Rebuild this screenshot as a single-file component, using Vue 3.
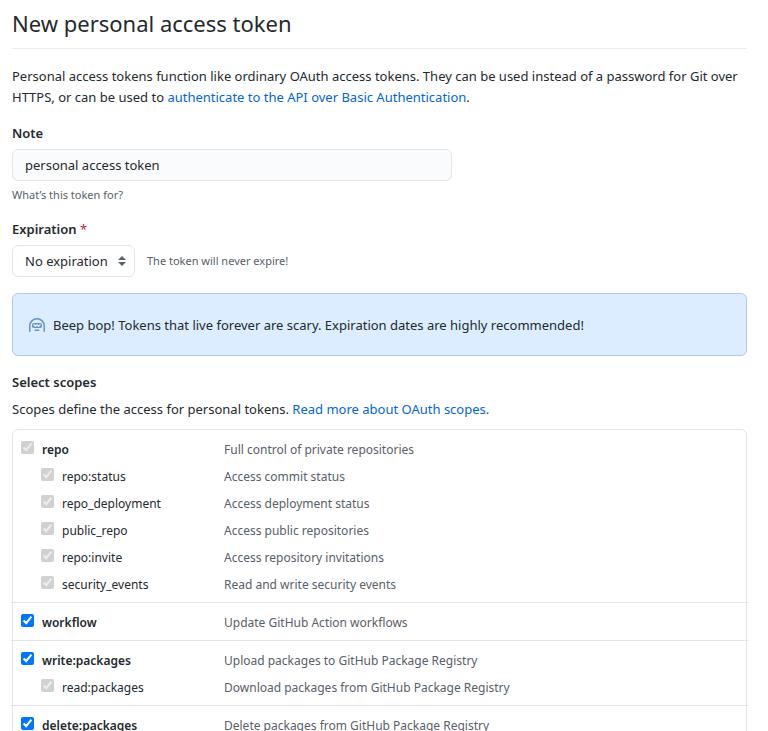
<script setup>
import { ref } from 'vue'

const note = ref('personal access token')
const expiration = ref('none')

const groups = ref([
  [
    { name: 'repo', text: 'Full control of private repositories', checked: true, disabled: true },
    { name: 'repo:status', text: 'Access commit status', checked: true, disabled: true },
    { name: 'repo_deployment', text: 'Access deployment status', checked: true, disabled: true },
    { name: 'public_repo', text: 'Access public repositories', checked: true, disabled: true },
    { name: 'repo:invite', text: 'Access repository invitations', checked: true, disabled: true },
    { name: 'security_events', text: 'Read and write security events', checked: true, disabled: true },
  ],
  [{ name: 'workflow', text: 'Update GitHub Action workflows', checked: true, disabled: false }],
  [
    { name: 'write:packages', text: 'Upload packages to GitHub Package Registry', checked: true, disabled: false },
    { name: 'read:packages', text: 'Download packages from GitHub Package Registry', checked: true, disabled: true },
  ],
  [{ name: 'delete:packages', text: 'Delete packages from GitHub Package Registry', checked: true, disabled: false }],
])
</script>

<template>
  <main class="page">
    <h1 class="title">New personal access token</h1>

    <p class="intro">
      Personal access tokens function like ordinary OAuth access tokens. They can be used instead of a password for Git over
      HTTPS, or can be used to <a href="#basic-auth">authenticate to the API over Basic Authentication</a>.
    </p>

    <form @submit.prevent>
      <label class="label" for="note">Note</label>
      <input id="note" v-model="note" class="control note" type="text" />
      <p class="hint note-hint">What’s this token for?</p>

      <label class="label" for="expiration">Expiration <span class="required">*</span></label>
      <div class="expiration">
        <div class="select-wrap">
          <select id="expiration" v-model="expiration" class="control select">
            <option value="none">No expiration</option>
            <option value="30">30 days</option>
            <option value="60">60 days</option>
            <option value="90">90 days</option>
          </select>
          <svg class="arrows" viewBox="0 0 8 10" aria-hidden="true">
            <path d="M4 0 8 4H0zM0 6h8L4 10z" />
          </svg>
        </div>
        <span class="hint">The token will never expire!</span>
      </div>

      <div class="flash">
        <svg class="hubot" viewBox="0 0 16 16" aria-hidden="true">
          <path
            fill-rule="evenodd"
            d="M0 8a8 8 0 1116 0v5.25a.75.75 0 01-1.5 0V8a6.5 6.5 0 10-13 0v5.25a.75.75 0 01-1.5 0V8zm5.5 4.25a.75.75 0 01.75-.75h3.5a.75.75 0 010 1.5h-3.5a.75.75 0 01-.75-.75zM3 6.75C3 5.784 3.784 5 4.75 5h6.5c.966 0 1.75.784 1.75 1.75v1.5A1.75 1.75 0 0111.25 10h-6.5A1.75 1.75 0 013 8.25v-1.5zm1.47-.53a.75.75 0 011.06 0l.97.97.97-.97a.75.75 0 011.06 0l.97.97.97-.97a.75.75 0 111.06 1.06l-1.5 1.5a.75.75 0 01-1.06 0L8 7.81l-.97.97a.75.75 0 01-1.06 0l-1.5-1.5a.75.75 0 010-1.06z"
          />
        </svg>
        <span>Beep bop! Tokens that live forever are scary. Expiration dates are highly recommended!</span>
      </div>

      <h2 class="label">Select scopes</h2>
      <p class="scopes-intro">
        Scopes define the access for personal tokens. <a href="#scopes">Read more about OAuth scopes.</a>
      </p>

      <div class="scopes">
        <ul v-for="group in groups" :key="group[0].name" class="group">
          <li v-for="(scope, i) in group" :key="scope.name" class="scope" :class="{ child: i > 0 }">
            <label class="scope-name">
              <input v-model="scope.checked" type="checkbox" :disabled="scope.disabled" />
              <span>{{ scope.name }}</span>
            </label>
            <span class="scope-text">{{ scope.text }}</span>
          </li>
        </ul>
      </div>
    </form>
  </main>
</template>

<style>
body {
  margin: 0;
  background: #fff;
}
</style>

<style scoped>
.page {
  padding: 7px 21px 0 12px;
  color: #24292e;
  font: 13px/21px "Segoe UI", "Noto Sans", "Open Sans", sans-serif;
}
a {
  color: #0366d6;
  text-decoration: none;
}
.title {
  margin: 0 0 17px;
  padding-bottom: 9px;
  border-bottom: 1px solid #eaecef;
  font-size: 22px;
  font-weight: 400;
  line-height: 32px;
}
.intro {
  margin: 0 0 15px;
}
.label {
  display: block;
  margin: 0 0 5px;
  font-size: 13px;
  font-weight: 600;
  line-height: 21px;
}
.required {
  color: #cb2431;
  font-weight: 400;
}
.control {
  box-sizing: border-box;
  display: block;
  height: 32px;
  padding: 4px 12px;
  border: 1px solid #e1e4e8;
  border-radius: 6px;
  color: #24292e;
  font: inherit;
}
.note {
  width: 60%;
  max-width: 440px;
  background: #fafbfc;
}
.hint {
  color: #586069;
  font-size: 11px;
  line-height: 18px;
}
.note-hint {
  margin: 5px 0 15px;
}
.expiration {
  display: flex;
  align-items: center;
  gap: 12px;
  margin-bottom: 16px;
}
.select-wrap {
  position: relative;
}
.select {
  appearance: none;
  padding-right: 26px;
  background: #fff;
}
.arrows {
  position: absolute;
  top: 11px;
  right: 9px;
  width: 8px;
  height: 10px;
  fill: #586069;
  pointer-events: none;
}
.flash {
  display: flex;
  align-items: center;
  gap: 8px;
  margin-bottom: 16px;
  padding: 21px 16px 19px;
  border: 1px solid #b0cbea;
  border-radius: 6px;
  background: #dbedff;
}
.hubot {
  width: 16px;
  height: 16px;
  fill: #6891c4;
}
.scopes-intro {
  margin: 6px 0 9px;
}
.scopes {
  border: 1px solid #e1e4e8;
  border-radius: 6px;
}
.group {
  margin: 0 -2px;
  padding: 6px 10px 4px;
  list-style: none;
}
.group + .group {
  border-top: 1px solid #e1e4e8;
}
.scope {
  display: grid;
  grid-template-columns: 203px 1fr;
  font-size: 12px;
  line-height: 27px;
}
.scope-name {
  display: flex;
  align-items: flex-start;
  gap: 8px;
  font-weight: 600;
}
.scope-name input {
  width: 13px;
  height: 13px;
  margin: 5px 0 0;
}
.child .scope-name {
  padding-left: 20px;
  font-weight: 400;
}
.scope-text {
  color: #586069;
}
</style>
